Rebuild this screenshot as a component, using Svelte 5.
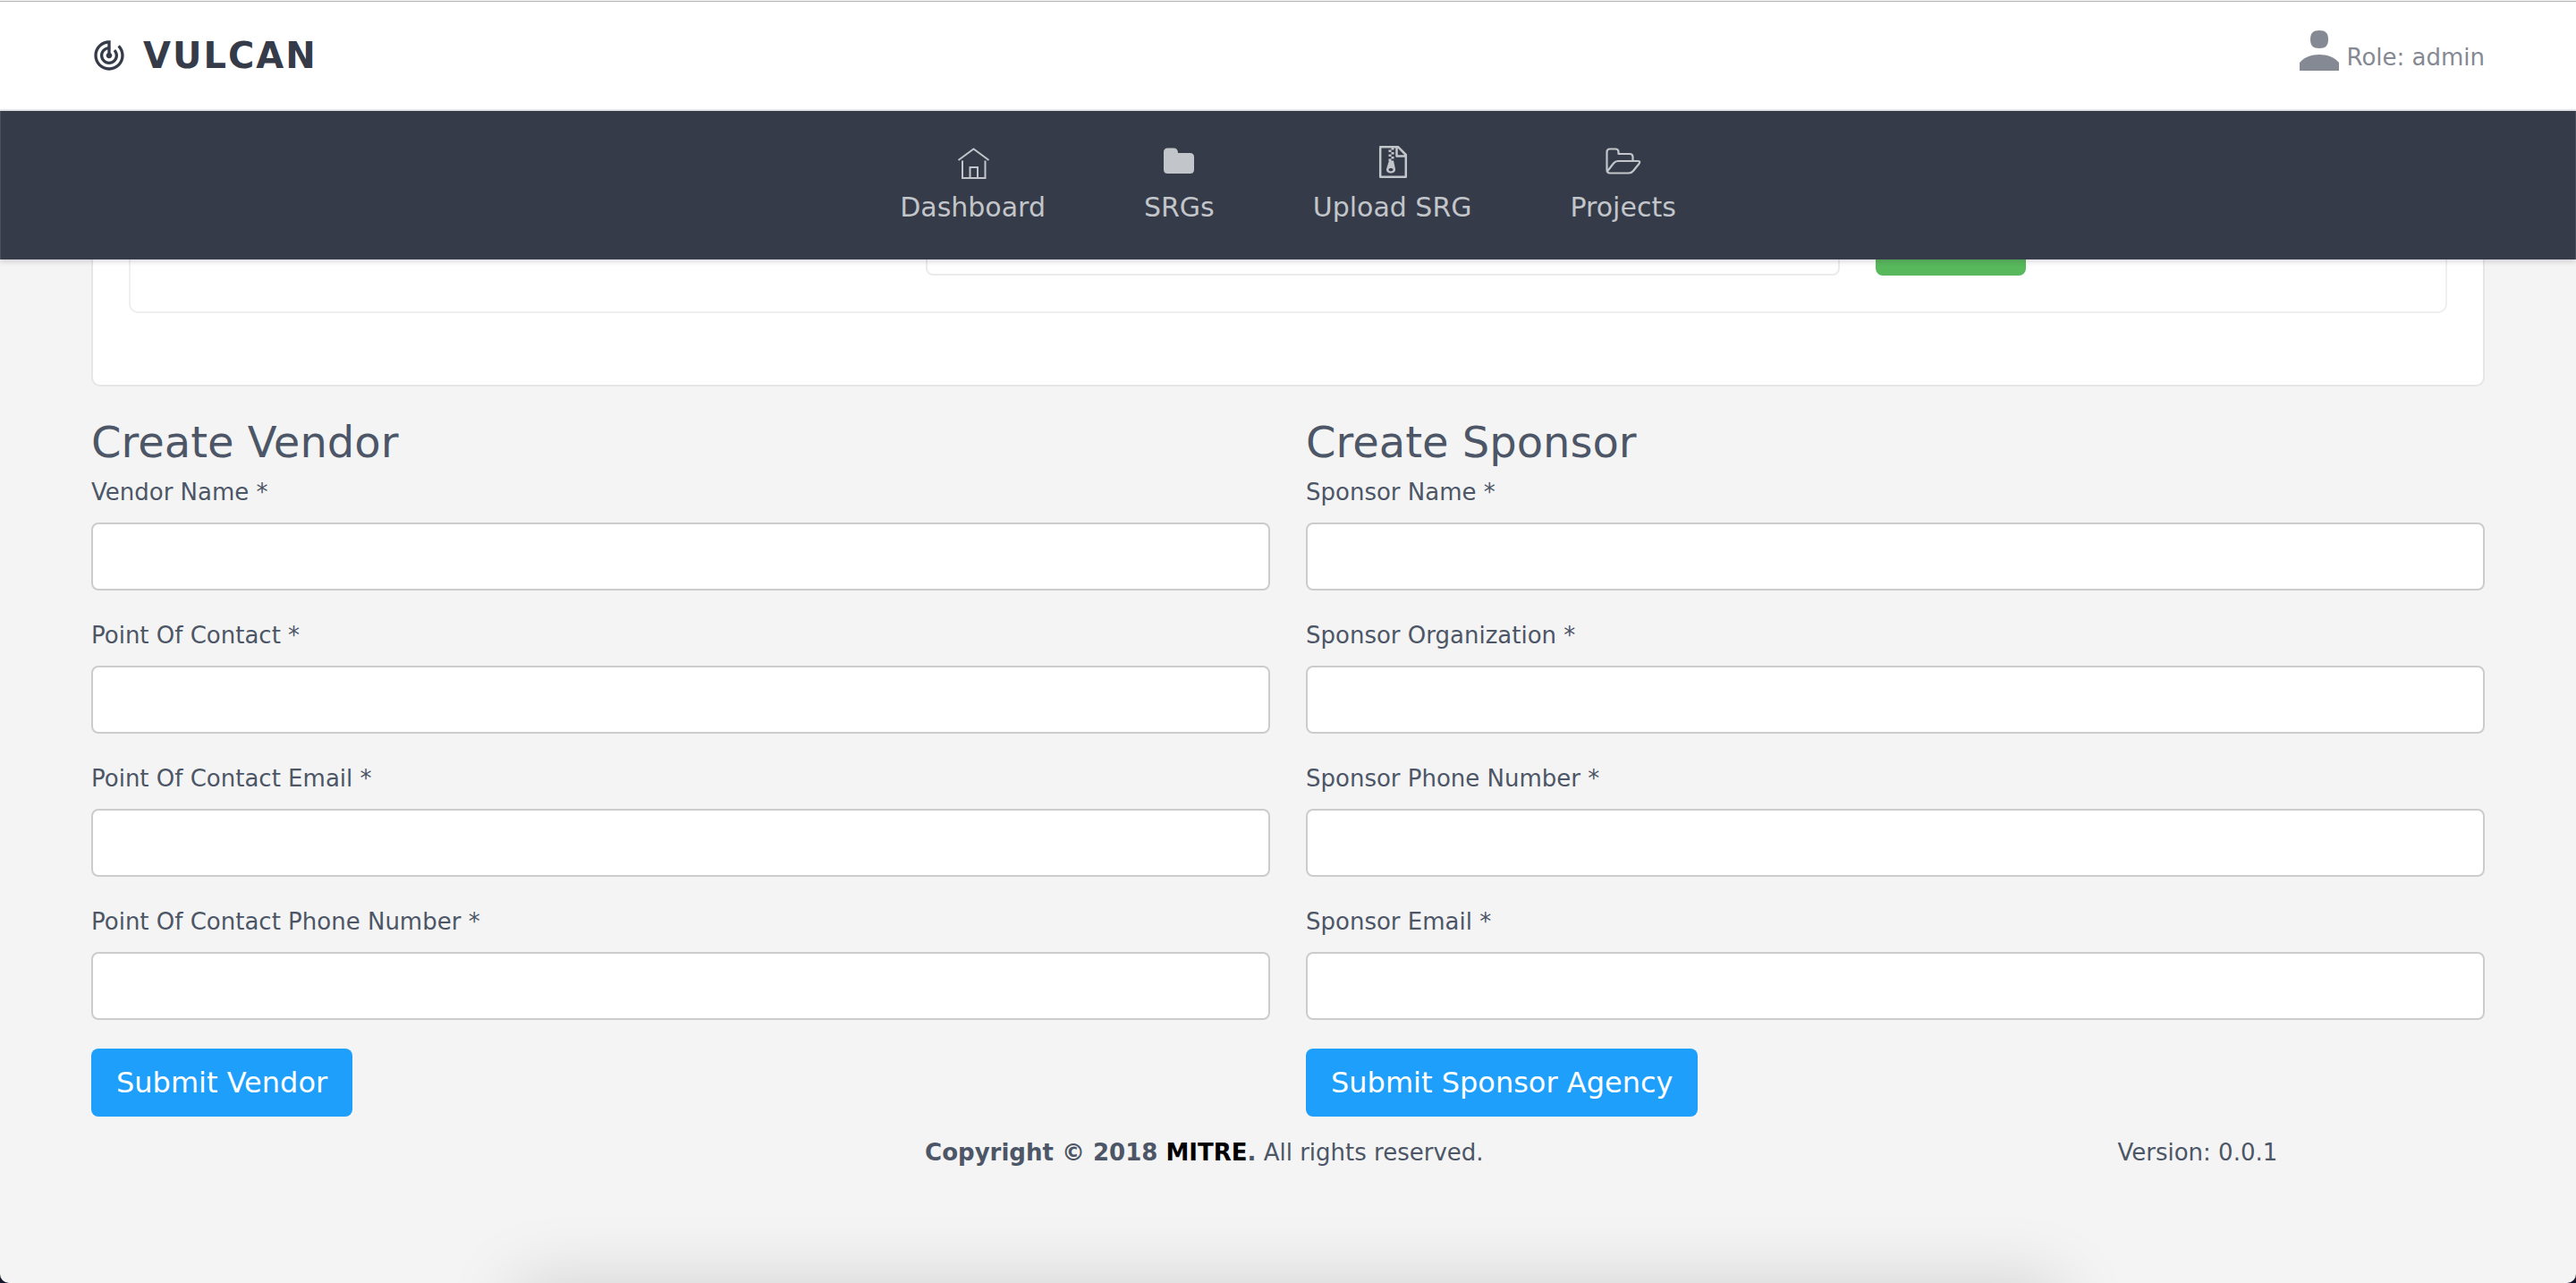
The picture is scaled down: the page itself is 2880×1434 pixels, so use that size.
<script>
  const forms = [
    {
      id: 'vendor',
      title: 'Create Vendor',
      fields: ['Vendor Name', 'Point Of Contact', 'Point Of Contact Email', 'Point Of Contact Phone Number'],
      submit: 'Submit Vendor'
    },
    {
      id: 'sponsor',
      title: 'Create Sponsor',
      fields: ['Sponsor Name', 'Sponsor Organization', 'Sponsor Phone Number', 'Sponsor Email'],
      submit: 'Submit Sponsor Agency'
    }
  ];
</script>

<div class="page">
  <header class="topbar">
    <a class="brand" href="#home">
      <svg class="brand-icon" viewBox="0 0 24 24" aria-hidden="true">
        <path d="M19.07 4.93l-1.41 1.41C19.1 7.79 20 9.79 20 12c0 4.42-3.58 8-8 8s-8-3.58-8-8c0-4.08 3.05-7.44 7-7.93v2.02C8.16 6.57 6 9.03 6 12c0 3.31 2.69 6 6 6s6-2.69 6-6c0-1.66-.67-3.16-1.76-4.24l-1.41 1.41C15.55 9.9 16 10.9 16 12c0 2.21-1.79 4-4 4s-4-1.79-4-4c0-1.86 1.28-3.41 3-3.86v2.14c-.6.35-1 .98-1 1.72 0 1.1.9 2 2 2s2-.9 2-2c0-.74-.4-1.38-1-1.72V2h-1C6.48 2 2 6.48 2 12s4.48 10 10 10 10-4.48 10-10c0-2.76-1.12-5.26-2.93-7.07z" />
      </svg>
      <span>VULCAN</span>
    </a>
    <a class="user" href="#account">
      <svg class="user-icon" viewBox="0 0 44 46" aria-hidden="true">
        <path d="M22 0c7 0 10 3 10 10s-3 10-10 10-10-3-10-10S15 0 22 0z" />
        <path d="M0 45V36C5 30 13 27 22 27s17 3 22 9v9z" />
      </svg>
      <span>Role: admin</span>
    </a>
  </header>

  <nav class="menu">
    <a href="#dashboard">
      <svg viewBox="0 0 40 40" fill="none" stroke="currentColor" stroke-width="2" aria-hidden="true">
        <path d="M3.500 17L20.500 4.500 37.500 17M8 17.500V37H33.500V17.500M16.500 37V25h8.500V37" />
      </svg>
      <span>Dashboard</span>
    </a>
    <a href="#srgs">
      <svg viewBox="0 0 40 40" fill="currentColor" aria-hidden="true">
        <path d="M3 8Q3 3.500 7.500 3.500H14Q19 3.500 19 9H32.500Q37 9 37 13.500V27.500Q37 32 32.500 32H7.500Q3 32 3 27.500z" />
      </svg>
      <span>SRGs</span>
    </a>
    <a href="#upload">
      <svg viewBox="0 0 40 40" fill="none" stroke="currentColor" stroke-width="2.500" stroke-linejoin="round" aria-hidden="true">
        <path d="M6.200 2.200H26L34.800 11V35.800H6.200zM24.500 2.500V12.500H34.500" />
        <path stroke="none" fill="currentColor" d="M18.500 3h3v2.500h-3zM15.500 5.500h3V8h-3zM18.500 8h3v2.500h-3zM15.500 10.500h3V13h-3zM18.500 13h3v2.500h-3zM15.500 15.500h3V18h-3z" />
        <path stroke="none" fill="currentColor" fill-rule="evenodd" d="M16 17.500h5l2 9.500c.8 6-10.800 6-10 0zM15.500 27.500c0 2.500 5 2.500 5 0 0-2-5-2-5 0z" />
      </svg>
      <span>Upload SRG</span>
    </a>
    <a href="#projects">
      <svg viewBox="0 0 40 40" fill="none" stroke="currentColor" stroke-width="2.200" stroke-linejoin="round" aria-hidden="true">
        <path d="M30.500 18V13.500Q30.500 10 27 10H14.500V8Q14.500 4.500 11 4.500H5Q1.500 4.500 1.500 8V27.500Q1.500 31.500 5 31.500H26Q29 31.500 31 29L37.500 21Q39.500 18 36 18H14Q11 18 9 20.500L2 29.500" />
      </svg>
      <span>Projects</span>
    </a>
  </nav>

  <main class="content">
    <section class="card">
      <div class="panel">
        <input class="panel-input" type="text" aria-label="Name" />
        <button class="panel-button" type="button" aria-label="Add"></button>
      </div>
    </section>

    <div class="forms">
      {#each forms as form}
        <form>
          <h2>{form.title}</h2>
          {#each form.fields as field, i}
            <div class="field">
              <label for="{form.id}-{i}">{field} *</label>
              <input id="{form.id}-{i}" type="text" />
            </div>
          {/each}
          <button class="submit" type="button">{form.submit}</button>
        </form>
      {/each}
    </div>
  </main>

  <footer class="footer">
    <p class="copyright"><strong>Copyright © 2018 <a href="#mitre">MITRE</a>.</strong> All rights reserved.</p>
    <p class="version">Version: 0.0.1</p>
  </footer>
  <div class="dock-shadow"></div>
</div>

<style>
  :global(body) {
    background: #14182a;
  }

  .page {
    position: relative;
    box-sizing: border-box;
    min-height: 100vh;
    overflow: hidden;
    background: #f4f4f4;
    border-radius: 0 0 10px 10px;
    color: #4c5667;
    font: 26px/36px "DejaVu Sans", Verdana, sans-serif;
  }

  .page * {
    box-sizing: border-box;
  }

  .topbar {
    position: relative;
    z-index: 2;
    display: flex;
    align-items: center;
    justify-content: space-between;
    height: 124px;
    padding: 0 102px;
    background: #fff;
    border-top: 1px solid #f4f4f4;
    border-bottom: 2px solid #ebebee;
    box-shadow: inset 0 1px #b0b4b4;
  }

  .brand {
    display: flex;
    align-items: center;
    gap: 18px;
    color: #353b48;
    font-size: 40px;
    font-weight: 700;
    letter-spacing: 2px;
    text-decoration: none;
  }

  .brand-icon {
    width: 40px;
    height: 40px;
    fill: currentColor;
  }

  .user {
    display: flex;
    align-items: flex-end;
    gap: 8px;
    padding-bottom: 8px;
    color: #858993;
    text-decoration: none;
  }

  .user-icon {
    width: 44px;
    height: 46px;
    margin-bottom: 2px;
    fill: currentColor;
  }

  .menu {
    position: relative;
    z-index: 2;
    display: flex;
    justify-content: center;
    gap: 110px;
    height: 166px;
    padding-top: 38px;
    background: #353b48;
    border: 0 solid #4a505c;
    border-width: 0 1px;
    box-shadow: 0 2px 6px rgba(50, 30, 60, 0.2);
  }

  .menu a {
    display: flex;
    flex-direction: column;
    align-items: center;
    gap: 12px;
    color: #c2c5ca;
    font-size: 30px;
    text-decoration: none;
  }

  .menu svg {
    width: 40px;
    height: 40px;
  }

  .content {
    padding: 0 102px;
  }

  .card {
    margin-top: -142px;
    padding: 40px 40px 80px;
    background: #fff;
    border: 2px solid #e6e6e6;
    border-radius: 10px;
  }

  .panel {
    display: grid;
    grid-template-columns: repeat(12, 1fr);
    column-gap: 40px;
    padding: 40px;
    border: 2px solid #efefef;
    border-radius: 10px;
  }

  .panel-input {
    grid-column: 5 / span 5;
    height: 76px;
    background: #fff;
    border: 2px solid #ebebeb;
    border-radius: 8px;
  }

  .panel-button {
    grid-column: 10 / span 3;
    width: 168px;
    height: 76px;
    background: #57b85c;
    border: 0;
    border-radius: 8px;
  }

  .forms {
    display: grid;
    grid-template-columns: 1fr 1fr;
    gap: 40px;
    margin-top: 34px;
  }

  h2 {
    margin: 0 0 10px;
    font-size: 48px;
    font-weight: 400;
    line-height: 56px;
  }

  .field {
    display: flex;
    flex-direction: column;
    gap: 16px;
    margin-bottom: 32px;
  }

  .field input {
    width: 100%;
    height: 76px;
    padding: 0 24px;
    background: #fff;
    border: 2px solid #ccc;
    border-radius: 8px;
    color: inherit;
    font: inherit;
  }

  .submit {
    height: 76px;
    padding: 0 28px;
    background: #1e9ffb;
    border: 0;
    border-radius: 8px;
    color: #fff;
    font: inherit;
    font-size: 32px;
  }

  .footer {
    display: grid;
    grid-template-columns: 17fr 59fr 24fr;
    margin-top: 22px;
    padding: 0 102px;
    text-align: center;
  }

  .footer p {
    margin: 0;
  }

  .copyright {
    grid-column: 2;
  }

  .copyright a {
    color: #000;
    text-decoration: none;
  }

  .dock-shadow {
    position: absolute;
    top: 100%;
    left: 20%;
    right: 20%;
    height: 80px;
    box-shadow: 0 0 80px rgba(0, 0, 0, 0.15);
  }
</style>
